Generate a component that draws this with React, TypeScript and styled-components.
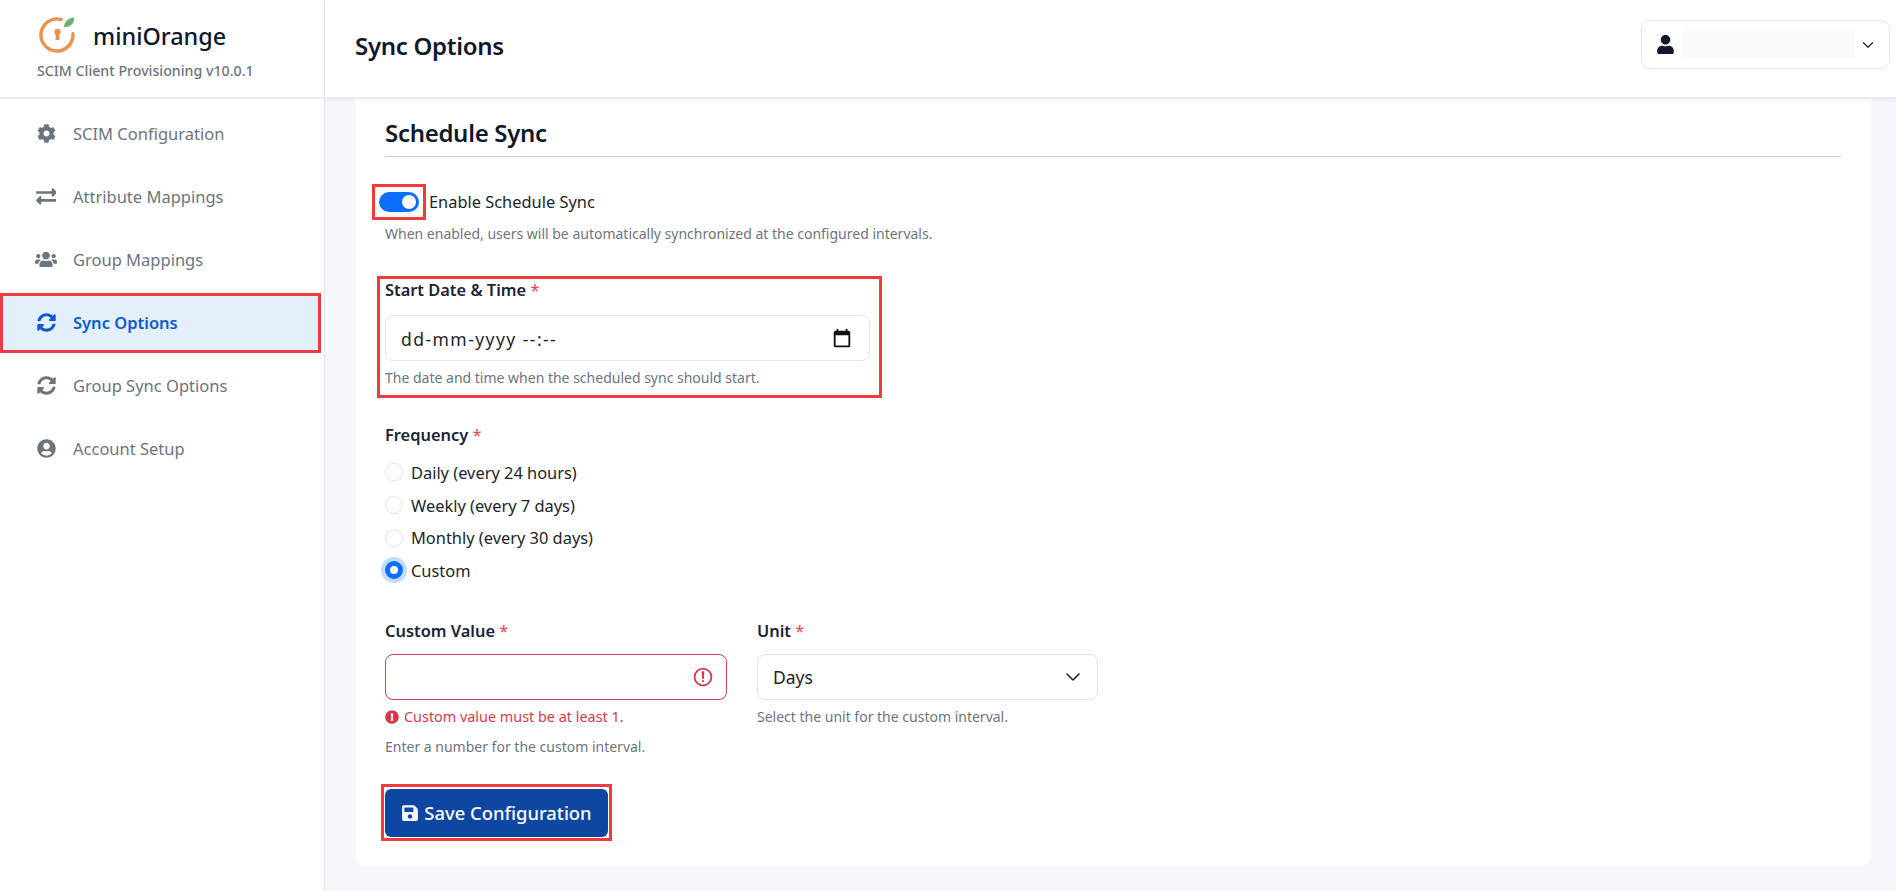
import React from 'react';
import styled, { createGlobalStyle } from 'styled-components';
import { FaCog, FaExchangeAlt, FaUsers, FaSyncAlt, FaUserCircle, FaSave, FaUser, FaExclamationCircle } from 'react-icons/fa';

const Global = createGlobalStyle`
  html, body { margin: 0; height: 100%; overflow: hidden; background: #f5f7fb; }
  body { font-family: "Noto Sans", Inter, "Liberation Sans", sans-serif; color: #212529; }
  * { box-sizing: border-box; }
`;

const Shell = styled.div`display: flex; height: 891px; width: 1896px;`;
const Sidebar = styled.aside`width: 325px; flex: none; background: #fff; border-right: 1px solid #e5e7eb;`;
const Brand = styled.div`height: 99px; border-bottom: 2px solid #e9ecef; padding: 18px 0 0 37px;`;
const BrandTop = styled.div`display: flex; align-items: center; gap: 16px; height: 36px; padding-left: 2px;`;
const BrandName = styled.div`font-size: 23.4px; font-weight: 500; color: #0f172a;`;
const BrandSub = styled.div`font-size: 14.2px; font-weight: 500; color: #6c757d; margin-top: 8px; line-height: 18px;`;
const Nav = styled.nav`display: flex; flex-direction: column; gap: 9px; padding: 8px 6px 0 3px;`;
const NavItem = styled.div<{ $active?: boolean }>`
  display: flex; align-items: center; height: 54px; padding: 0 0 2px 32px; gap: 16px; font-size: 16.5px;
  color: ${p => (p.$active ? '#0d5bd1' : '#6c757d')};
  background: ${p => (p.$active ? '#e3f0fc' : 'transparent')};
  font-weight: ${p => (p.$active ? 600 : 400)};
  outline: ${p => (p.$active ? '3px solid #ef3a3f' : 'none')};
`;
const NavIcon = styled.span`width: 22px; display: flex; justify-content: center; font-size: 19px;`;

const Main = styled.main`flex: 1; display: flex; flex-direction: column; min-width: 0;`;
const Header = styled.header`
  height: 99px; flex: none; background: #fff; border-bottom: 2px solid #e9ecef;
  box-shadow: 0 1px 3px rgba(0, 0, 0, 0.05);
  display: flex; align-items: flex-start; justify-content: space-between; padding: 20px 6px 0 30px;
  position: relative; z-index: 1;
`;
const Title = styled.h1`margin: 6px 0 0; font-size: 24px; font-weight: 600; color: #0f172a; line-height: 40px; letter-spacing: -0.3px;`;
const UserButton = styled.div`
  width: 249px; height: 49px; border: 1px solid #e5e7eb; border-radius: 9px; background: #fff;
  display: flex; align-items: center; padding: 0 15px 0 14px;
`;
const UserName = styled.div`flex: 1; height: 29px; background: #fafafa; margin: 0 7px 0 8px;`;

const Content = styled.div`flex: 1; padding: 0 25px 25px 30px; min-height: 0;`;
const Card = styled.section`
  height: 767px; background: #fff; border-radius: 0 0 12px 12px; padding: 17px 30px 0 30px;
`;
const CardTitle = styled.h2`
  margin: 0; height: 41px; font-size: 24px; line-height: 34px; font-weight: 600; color: #0f172a;
  border-bottom: 1px solid #c9ccd1; letter-spacing: -0.3px;
`;
const ToggleRow = styled.div`display: flex; align-items: center; gap: 3px; margin: 27px 0 0 -13px;`;
const ToggleBox = styled.div`border: 3px solid #ef3a3f; padding: 5px 4px; display: flex;`;
const Toggle = styled.div`
  width: 40px; height: 20px; border-radius: 10px; background: #0d6efd; display: flex; align-items: center;
  justify-content: flex-end; padding-right: 3px;
`;
const Knob = styled.div`width: 14px; height: 14px; border-radius: 50%; background: #fff;`;
const ToggleLabel = styled.span`font-size: 16.4px; color: #212529; margin-top: -1px;`;
const Help = styled.div<{ $top?: number }>`font-size: 14px; line-height: 18px; color: #6c757d; margin-top: ${p => p.$top ?? 0}px;`;
const Annotated = styled.div`
  width: 505px; height: 122px; margin: 33px 0 0 -8px; padding: 0 9px 0 5px; border: 3px solid #ef3a3f;
`;
const Label = styled.div<{ $top?: number }>`
  font-size: 16.4px; font-weight: 600; line-height: 22px; color: #1a2433; margin-top: ${p => p.$top ?? 0}px;
`;
const Star = styled.span`color: #e5484d; font-weight: 400;`;
const InputBox = styled.div<{ $invalid?: boolean; $top?: number }>`
  display: flex; align-items: center; justify-content: space-between; height: 46px; margin-top: ${p => p.$top ?? 12}px;
  border: 1px solid ${p => (p.$invalid ? '#d14353' : '#e2e4e8')}; border-radius: 8px; padding: 1px 12px 0 15px;
  font-size: 17.5px; color: #212529; background: #fff;
`;
const DateText = styled.span`letter-spacing: 1.45px;`;
const InputEnd = styled.span`display: flex; margin-right: 4px;`;
const RadioGroup = styled.div`display: flex; flex-direction: column; margin-top: 10px;`;
const RadioRow = styled.div`display: flex; align-items: center; height: 32.7px; gap: 8px; font-size: 16.4px; color: #212529;`;
const Radio = styled.span<{ $on?: boolean }>`
  width: 18px; height: 18px; border-radius: 50%; flex: none;
  border: ${p => (p.$on ? '5px solid #0d6efd' : '1px solid #dee2e6')};
  background: #fff;
  box-shadow: ${p => (p.$on ? '0 0 0 4px #c2dbfe' : 'none')};
`;
const Columns = styled.div`display: grid; grid-template-columns: 342px 341px; gap: 30px; margin-top: 33px;`;
const ErrorLine = styled.div`display: flex; align-items: center; gap: 5px; font-size: 14.4px; line-height: 18px; color: #d63a4a; margin-top: 8px;`;
const SaveBox = styled.div`
  display: inline-block; border: 3px solid #ef3a3f; padding: 2px 1px 1px; margin: 28px 0 0 -4px;
`;
const SaveButton = styled.button`
  width: 223px; height: 48px; border: 0; border-radius: 6px; background: #0d47a1; color: #fff;
  display: flex; align-items: center; justify-content: center; gap: 5px; font: 500 18.4px "Noto Sans", sans-serif;
`;

const Logo = () => (
  <svg width="38" height="38" viewBox="0 0 38 38" fill="none">
    <path d="M22.1 2.5A16 16 0 1 0 33.9 16.6" stroke="#e8934e" strokeWidth="3.4" strokeLinecap="round" />
    <circle cx="18.5" cy="15" r="3.2" fill="#e8934e" />
    <path d="M17 16.5h3l.6 6.5h-4.200z" fill="#e8934e" />
    <path d="M25 10C25 5 29 1 35 .5C36 5 32 11 25 10z" fill="#6fb07a" />
  </svg>
);
const Chevron = ({ size = 16 }: { size?: number }) => (
  <svg width={size} height={size} viewBox="0 0 16 16" fill="none" stroke="#212529" strokeWidth="1.6" strokeLinecap="round" strokeLinejoin="round">
    <path d="M2 5l6 6 6-6" />
  </svg>
);
const CalendarIcon = () => (
  <svg width="22" height="22" viewBox="0 0 24 24" fill="#111"><path d="M19 3h-1V1h-2v2H8V1H6v2H5a2 2 0 0 0-2 2v14a2 2 0 0 0 2 2h14a2 2 0 0 0 2-2V5a2 2 0 0 0-2-2zm0 16H5V8h14v11z" /></svg>
);
const InvalidIcon = () => (
  <svg width="22" height="22" viewBox="0 0 12 12" fill="none" stroke="#d63a4a">
    <circle cx="6" cy="6" r="4.6" />
    <path strokeLinejoin="round" d="M5.8 3.4h.4L6 6.6z" />
    <circle cx="6" cy="8.3" r=".6" fill="#d63a4a" stroke="none" />
  </svg>
);

const items = [
  { label: 'SCIM Configuration', icon: <FaCog /> },
  { label: 'Attribute Mappings', icon: <FaExchangeAlt size="1.1em" /> },
  { label: 'Group Mappings', icon: <FaUsers size="1.2em" /> },
  { label: 'Sync Options', icon: <FaSyncAlt />, active: true },
  { label: 'Group Sync Options', icon: <FaSyncAlt /> },
  { label: 'Account Setup', icon: <FaUserCircle /> },
];
const freq = ['Daily (every 24 hours)', 'Weekly (every 7 days)', 'Monthly (every 30 days)', 'Custom'];

export default function App() {
  return (
    <Shell>
      <Global />
      <Sidebar>
        <Brand>
          <BrandTop><Logo /><BrandName>miniOrange</BrandName></BrandTop>
          <BrandSub>SCIM Client Provisioning v10.0.1</BrandSub>
        </Brand>
        <Nav>
          {items.map(i => (
            <NavItem key={i.label} $active={i.active}><NavIcon>{i.icon}</NavIcon>{i.label}</NavItem>
          ))}
        </Nav>
      </Sidebar>
      <Main>
        <Header>
          <Title>Sync Options</Title>
          <UserButton>
            <FaUser size={19} color="#111827" />
            <UserName />
            <Chevron size={12} />
          </UserButton>
        </Header>
        <Content>
          <Card>
            <CardTitle>Schedule Sync</CardTitle>
            <ToggleRow>
              <ToggleBox><Toggle><Knob /></Toggle></ToggleBox>
              <ToggleLabel>Enable Schedule Sync</ToggleLabel>
            </ToggleRow>
            <Help $top={5}>When enabled, users will be automatically synchronized at the configured intervals.</Help>
            <Annotated>
              <Label>Start Date &amp; Time <Star>*</Star></Label>
              <InputBox $top={14}><DateText>dd-mm-yyyy --:--</DateText><InputEnd><CalendarIcon /></InputEnd></InputBox>
              <Help $top={8}>The date and time when the scheduled sync should start.</Help>
            </Annotated>
            <Label $top={26}>Frequency <Star>*</Star></Label>
            <RadioGroup>
              {freq.map((f, i) => (
                <RadioRow key={f}><Radio $on={i === 3} />{f}</RadioRow>
              ))}
            </RadioGroup>
            <Columns>
              <div>
                <Label>Custom Value <Star>*</Star></Label>
                <InputBox $invalid><span /><InvalidIcon /></InputBox>
                <ErrorLine><FaExclamationCircle size={14} />Custom value must be at least 1.</ErrorLine>
                <Help $top={12}>Enter a number for the custom interval.</Help>
              </div>
              <div>
                <Label>Unit <Star>*</Star></Label>
                <InputBox>Days<InputEnd><Chevron /></InputEnd></InputBox>
                <Help $top={8}>Select the unit for the custom interval.</Help>
              </div>
            </Columns>
            <SaveBox>
              <SaveButton><FaSave size={18} />Save Configuration</SaveButton>
            </SaveBox>
          </Card>
        </Content>
      </Main>
    </Shell>
  );
}
